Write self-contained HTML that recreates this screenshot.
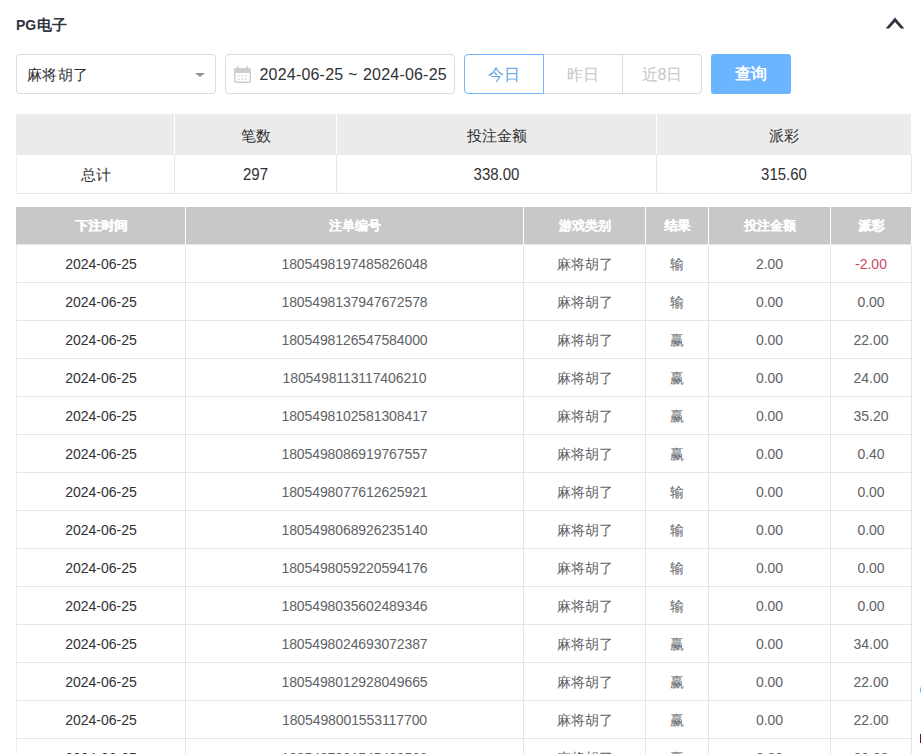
<!DOCTYPE html>
<html><head><meta charset="utf-8">
<style>
*{box-sizing:border-box;margin:0;padding:0}
html,body{width:921px;height:754px;overflow:hidden;background:#fff}
body{font-family:"Liberation Sans",sans-serif;font-size:14px;color:#303133;position:relative}
.title{position:absolute;left:16px;top:15px;font-size:14px;font-weight:bold;color:#2f3540;line-height:20px;white-space:nowrap}
.title span{font-size:15px;letter-spacing:0.3px;margin-left:0.7px;position:relative;top:0px}
.ic{position:absolute}
.box{position:absolute;top:54px;height:40px;border:1px solid #dbdbdb;border-radius:4px;background:#fff}
.sel{left:16px;width:200px}
.sel .txt{position:absolute;left:10px;top:1px;line-height:38px;color:#303133;font-size:15px;letter-spacing:0.4px}
.caret{position:absolute;left:195px;top:73px;width:0;height:0;border-left:5px solid transparent;border-right:5px solid transparent;border-top:4px solid #909090}
.date{left:225px;width:230px}
.dt{position:absolute;top:56px;line-height:38px;color:#303133;font-size:16px;white-space:nowrap;letter-spacing:0.2px}
.btn{position:absolute;top:54px;height:40px;border:1px solid #dbdbdb;background:#fff;color:#c4c6ca;text-align:center;line-height:38px;font-size:16px;padding-top:1px}
.b1{left:464px;width:80px;border-color:#73b6f5;color:#5ea2e6;border-radius:4px 0 0 4px;z-index:2}
.b2{left:543px;width:80px}
.b3{left:622px;width:80px;border-radius:0 4px 4px 0}
.q{position:absolute;left:711px;top:54px;width:80px;height:40px;background:#6ab5fd;border-radius:3px;color:#fff;text-align:center;line-height:40px;font-size:16px;font-weight:bold}
table{border-collapse:collapse;position:absolute;left:16px;table-layout:fixed}
.sum{top:114px;width:895px}
.sum td{border:1px solid #e6e6e6;height:40px;text-align:center;font-size:15px;color:#303133;padding-top:0px}
.sum tr.h td{background:#ebebeb;border-color:#ebebeb;border-right-color:#fff;padding-top:3px}
.sum tr.b td{height:39px;padding-bottom:1px}
.n{display:inline-block;transform:scaleY(1.1)}
.det th:first-child{border-left:1px solid #c8c8c8}
.det td.c2{letter-spacing:-0.1px}
.det{top:207px;width:895px}
.det th{background:#c8c8c8;color:#fff;font-weight:bold;height:37px;border-right:1px solid #fff;font-size:13px;text-shadow:0.5px 0 0 #fff;padding-top:2px}
.det td{height:38px;border:1px solid #e6e6e6;text-align:center;color:#606266;font-size:14px;padding-top:1px}
.cj{position:relative;top:1px}
.det td.c1{color:#303133;border-left-color:#f0f0f0}
.sum tr.b td:first-child{border-left-color:#f0f0f0}
.neg{color:#cf4664}
</style></head><body>
<div class="title">PG<span>电子</span></div>
<svg class="ic" style="left:880px;top:10px" width="30" height="25" viewBox="0 0 30 25"><path d="M15 7.6 L24.4 18.4 L20.9 18.4 L15 11.9 L9.1 18.4 L5.6 18.4 Z" fill="#2f3540"/></svg>
<div class="box sel"><span class="txt">麻将胡了</span></div>
<span class="caret"></span>
<div class="box date"></div><span class="dt" style="left:259.5px">2024-06-25</span><span class="dt" style="left:348px">~</span><span class="dt" style="left:363px">2024-06-25</span>
<svg class="ic" style="left:233px;top:65px" width="19" height="19" viewBox="0 0 19 19">
<rect x="1.75" y="3.75" width="15.5" height="13.5" rx="1" fill="none" stroke="#cfcfcf" stroke-width="1.5"/>
<rect x="1.5" y="3.5" width="16" height="4.5" fill="#cfcfcf"/>
<rect x="4" y="1.2" width="1.6" height="3.5" fill="#cfcfcf"/><rect x="13.4" y="1.2" width="1.6" height="3.5" fill="#cfcfcf"/>
<g fill="#d6d6d6"><rect x="4.9" y="10.1" width="1.6" height="1.6"/><rect x="8.3" y="10.1" width="1.6" height="1.6"/><rect x="11.7" y="10.1" width="1.6" height="1.6"/><rect x="4.9" y="13.5" width="1.6" height="1.6"/><rect x="8.3" y="13.5" width="1.6" height="1.6"/><rect x="11.7" y="13.5" width="1.6" height="1.6"/></g>
</svg>
<div class="btn b1">今日</div><div class="btn b2">昨日</div><div class="btn b3">近8日</div>
<div class="q">查询</div>
<table class="sum">
<colgroup><col style="width:158px"><col style="width:162px"><col style="width:320px"><col style="width:255px"></colgroup>
<tr class="h"><td></td><td>笔数</td><td>投注金额</td><td>派彩</td></tr>
<tr class="b"><td><span class="cj" style="top:1.5px">总计</span></td><td><span class="n">297</span></td><td><span class="n">338.00</span></td><td><span class="n">315.60</span></td></tr>
</table>
<table class="det">
<colgroup><col style="width:169px"><col style="width:338px"><col style="width:122px"><col style="width:63px"><col style="width:122px"><col style="width:81px"></colgroup>
<tr><th>下注时间</th><th>注单编号</th><th>游戏类别</th><th>结果</th><th>投注金额</th><th>派彩</th></tr>
<tr><td class="c1">2024-06-25</td><td class="c2">1805498197485826048</td><td class="c3"><span class="cj">麻将胡了</span></td><td class="c4"><span class="cj">输</span></td><td class="c5">2.00</td><td class="c6"><span class="neg">-2.00</span></td></tr>
<tr><td class="c1">2024-06-25</td><td class="c2">1805498137947672578</td><td class="c3"><span class="cj">麻将胡了</span></td><td class="c4"><span class="cj">输</span></td><td class="c5">0.00</td><td class="c6"><span>0.00</span></td></tr>
<tr><td class="c1">2024-06-25</td><td class="c2">1805498126547584000</td><td class="c3"><span class="cj">麻将胡了</span></td><td class="c4"><span class="cj">赢</span></td><td class="c5">0.00</td><td class="c6"><span>22.00</span></td></tr>
<tr><td class="c1">2024-06-25</td><td class="c2">1805498113117406210</td><td class="c3"><span class="cj">麻将胡了</span></td><td class="c4"><span class="cj">赢</span></td><td class="c5">0.00</td><td class="c6"><span>24.00</span></td></tr>
<tr><td class="c1">2024-06-25</td><td class="c2">1805498102581308417</td><td class="c3"><span class="cj">麻将胡了</span></td><td class="c4"><span class="cj">赢</span></td><td class="c5">0.00</td><td class="c6"><span>35.20</span></td></tr>
<tr><td class="c1">2024-06-25</td><td class="c2">1805498086919767557</td><td class="c3"><span class="cj">麻将胡了</span></td><td class="c4"><span class="cj">赢</span></td><td class="c5">0.00</td><td class="c6"><span>0.40</span></td></tr>
<tr><td class="c1">2024-06-25</td><td class="c2">1805498077612625921</td><td class="c3"><span class="cj">麻将胡了</span></td><td class="c4"><span class="cj">输</span></td><td class="c5">0.00</td><td class="c6"><span>0.00</span></td></tr>
<tr><td class="c1">2024-06-25</td><td class="c2">1805498068926235140</td><td class="c3"><span class="cj">麻将胡了</span></td><td class="c4"><span class="cj">输</span></td><td class="c5">0.00</td><td class="c6"><span>0.00</span></td></tr>
<tr><td class="c1">2024-06-25</td><td class="c2">1805498059220594176</td><td class="c3"><span class="cj">麻将胡了</span></td><td class="c4"><span class="cj">输</span></td><td class="c5">0.00</td><td class="c6"><span>0.00</span></td></tr>
<tr><td class="c1">2024-06-25</td><td class="c2">1805498035602489346</td><td class="c3"><span class="cj">麻将胡了</span></td><td class="c4"><span class="cj">输</span></td><td class="c5">0.00</td><td class="c6"><span>0.00</span></td></tr>
<tr><td class="c1">2024-06-25</td><td class="c2">1805498024693072387</td><td class="c3"><span class="cj">麻将胡了</span></td><td class="c4"><span class="cj">赢</span></td><td class="c5">0.00</td><td class="c6"><span>34.00</span></td></tr>
<tr><td class="c1">2024-06-25</td><td class="c2">1805498012928049665</td><td class="c3"><span class="cj">麻将胡了</span></td><td class="c4"><span class="cj">赢</span></td><td class="c5">0.00</td><td class="c6"><span>22.00</span></td></tr>
<tr><td class="c1">2024-06-25</td><td class="c2">1805498001553117700</td><td class="c3"><span class="cj">麻将胡了</span></td><td class="c4"><span class="cj">赢</span></td><td class="c5">0.00</td><td class="c6"><span>22.00</span></td></tr>
<tr><td class="c1">2024-06-25</td><td class="c2">1805497991545409539</td><td class="c3"><span class="cj">麻将胡了</span></td><td class="c4"><span class="cj">赢</span></td><td class="c5">0.00</td><td class="c6"><span>20.00</span></td></tr>
</table>
<div style="position:absolute;left:920px;top:684px;width:12px;height:12px;border-radius:6px;background:#5aa6e8"></div>
<div style="position:absolute;left:920px;top:734px;width:4px;height:9px;background:#4a1c26"></div>
</body></html>
